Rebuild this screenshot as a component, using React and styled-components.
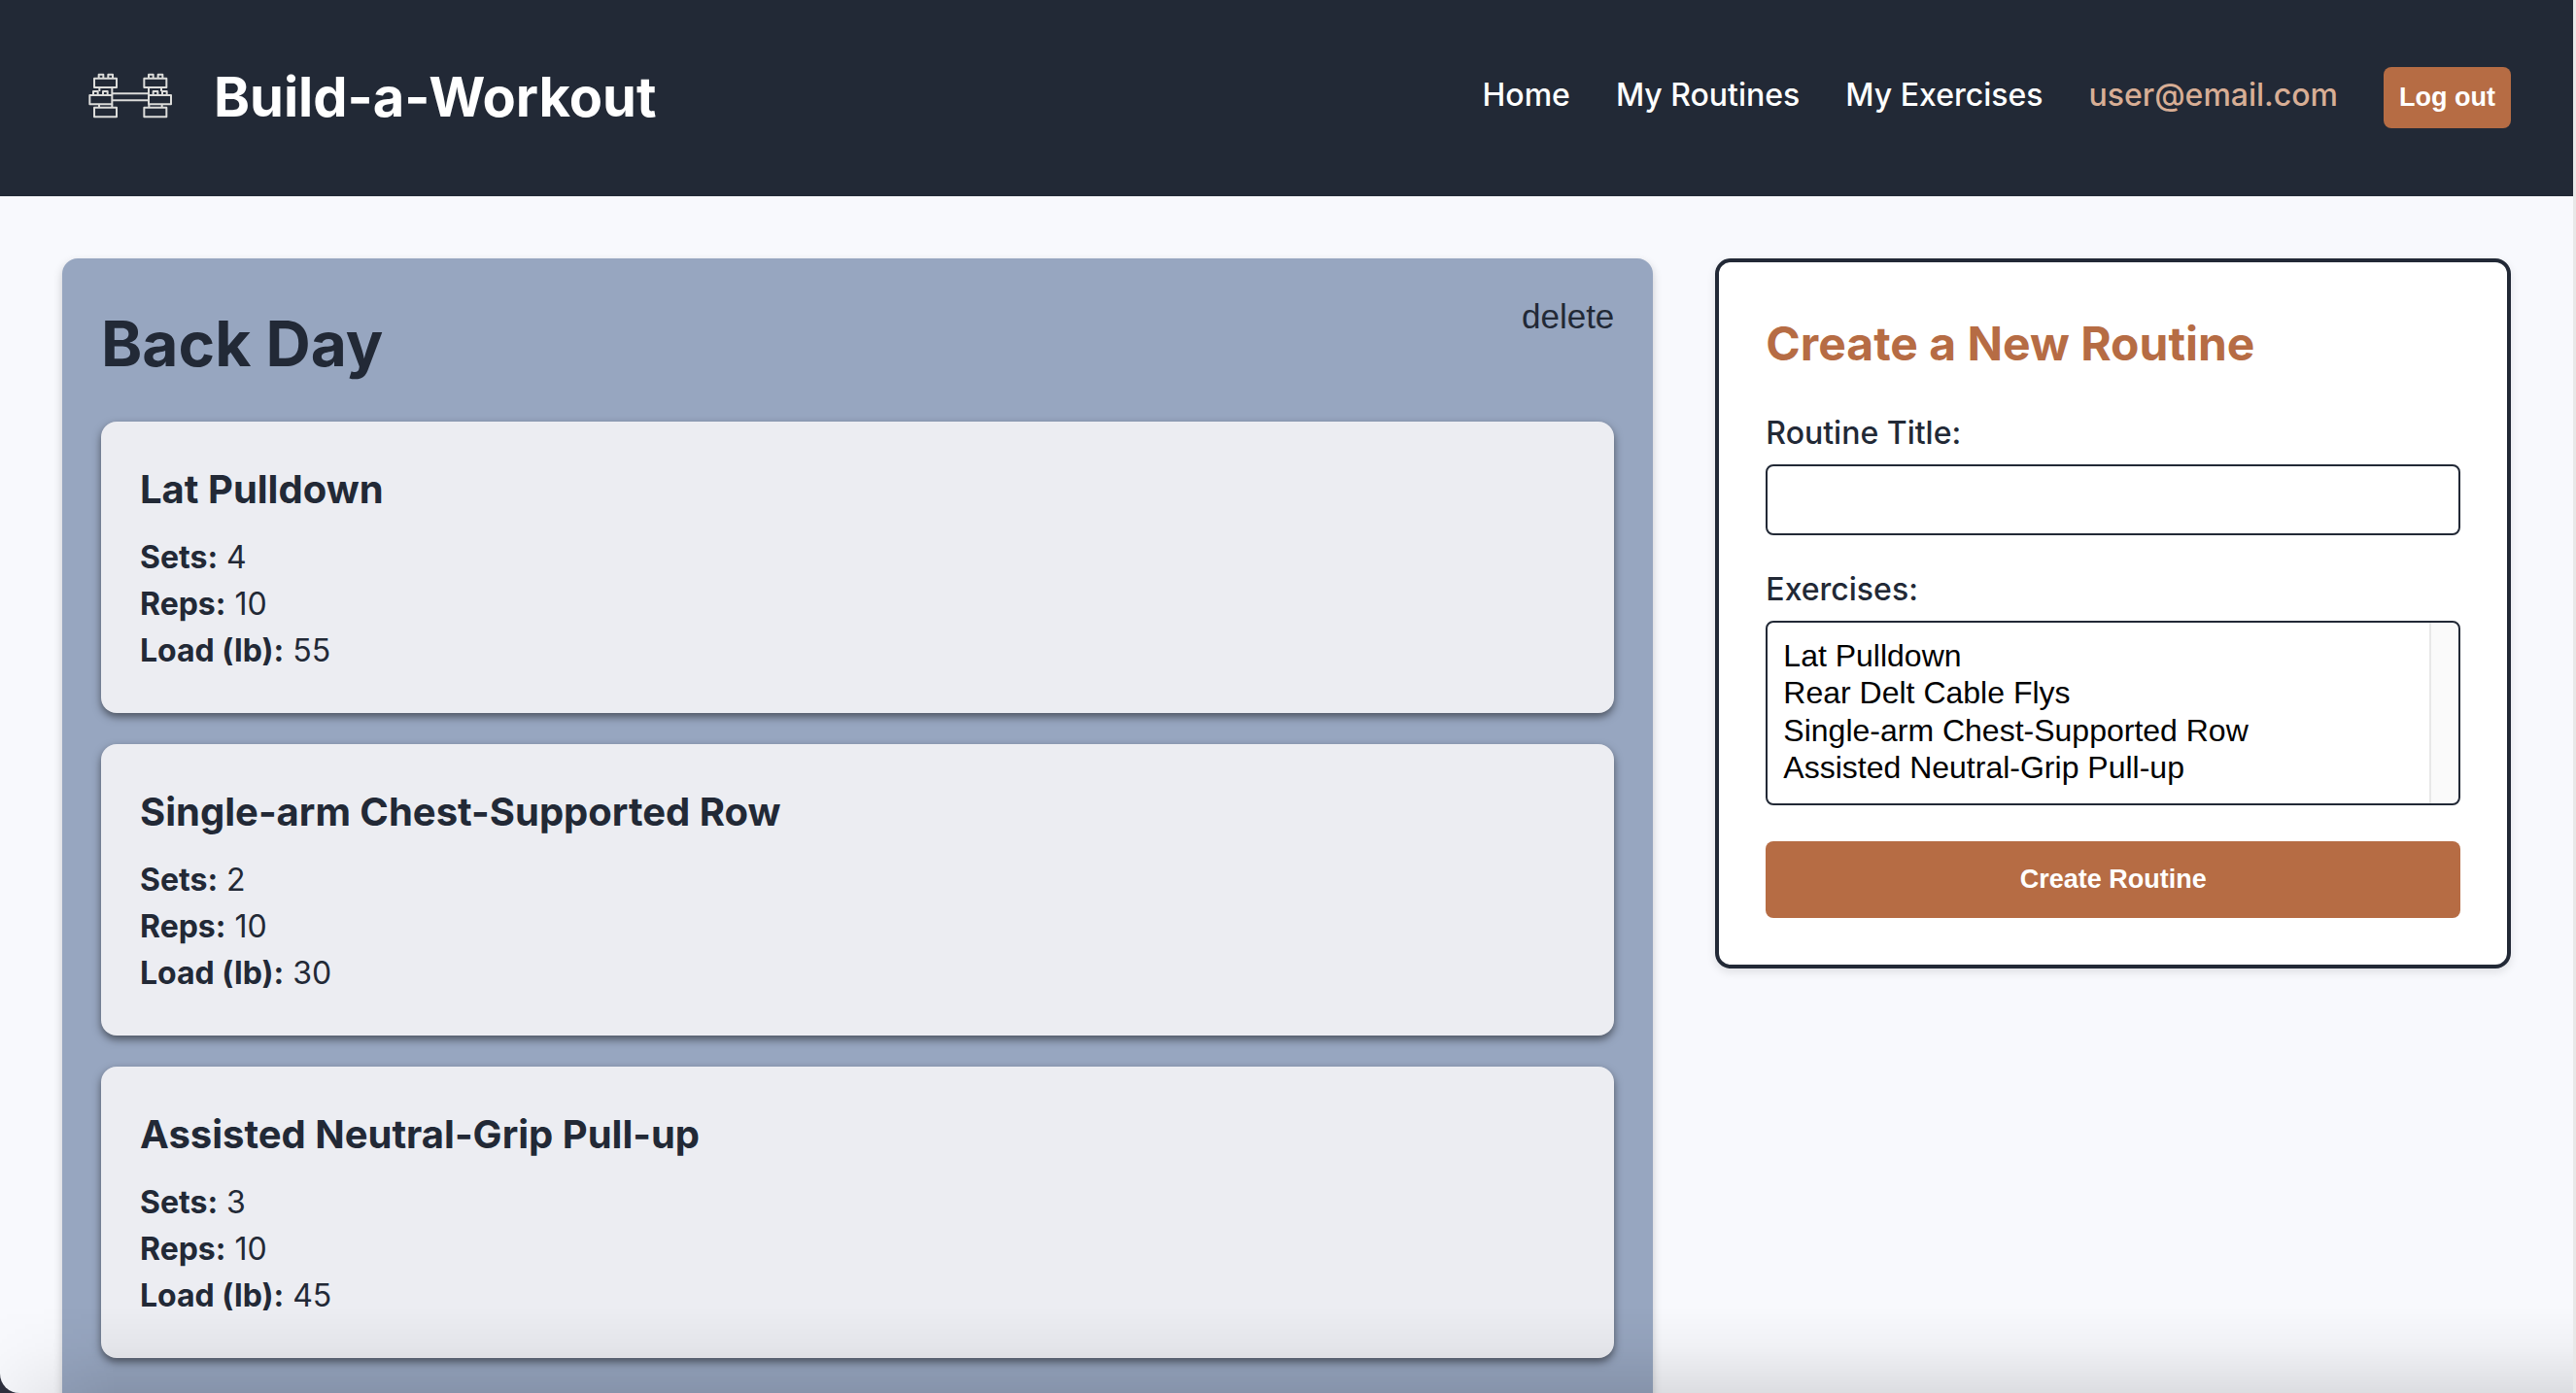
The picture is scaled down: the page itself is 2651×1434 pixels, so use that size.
import React from "react";
import styled, { createGlobalStyle } from "styled-components";

const ink = "#222936";
const rust = "#b66c44";
const inter = 'Inter, "Liberation Sans", sans-serif';
const arial = '"Liberation Sans", Arial, sans-serif';

const GlobalStyle = createGlobalStyle`
  *, *::before, *::after { box-sizing: border-box; }
  body {
    margin: 0;
    background: #2e303e;
    color: ${ink};
    font-family: ${inter};
    font-size: 32px;
    line-height: 48px;
  }
  h1, h2, h3, p, ul { margin: 0; padding: 0; }
`;

const Frame = styled.div`
  position: relative;
  height: 100vh;
  overflow: hidden;
  background: #f8f9fd;
  border-right: 3px solid #e8e8e8;
  border-bottom-left-radius: 20px;

  &::after {
    content: "";
    position: absolute;
    inset: auto 0 0 0;
    height: 88px;
    pointer-events: none;
    background: linear-gradient(to bottom, transparent, rgba(0, 0, 0, 0.03) 45%, rgba(0, 0, 0, 0.11));
    mask-image: linear-gradient(to right, rgba(0, 0, 0, 0.2), black 120px);
  }
`;

const Header = styled.header`
  display: flex;
  align-items: center;
  justify-content: space-between;
  min-height: 202px;
  padding: 0 64px 2px;
  background: ${ink};
  color: #fff;
`;

const Brand = styled.a`
  display: flex;
  align-items: center;
  gap: 16px;
  color: inherit;
  text-decoration: none;
`;

const BrandName = styled.h1`
  font-size: 56px;
  line-height: 84px;
  font-weight: 700;
`;

const Nav = styled.nav`
  display: flex;
  align-items: baseline;
  gap: 47px;
`;

const NavLink = styled.a`
  color: #fff;
  font-weight: 500;
  text-decoration: none;
`;

const UserEmail = styled.span`
  color: #d8ae95;
  font-weight: 500;
`;

const Button = styled.button`
  padding: ${(p) => (p.$wide ? "24px 16px" : "16px")};
  width: ${(p) => (p.$wide ? "100%" : "auto")};
  border: 0;
  border-radius: 8px;
  background: ${rust};
  color: #fff;
  font: 700 27px/31px ${arial};
  cursor: pointer;
`;

const Main = styled.main`
  display: grid;
  grid-template-columns: 2fr 1fr;
  align-items: start;
  gap: 64px;
  padding: 64px;
`;

const Routine = styled.article`
  padding: 40px 40px 72px;
  border-radius: 16px;
  background: #97a6c0;
  box-shadow: 0 4px 10px rgba(0, 0, 0, 0.2);
`;

const RoutineHead = styled.div`
  display: flex;
  align-items: flex-start;
  justify-content: space-between;
  margin-bottom: 32px;
`;

const RoutineTitle = styled.h2`
  font-size: 64px;
  line-height: 96px;
  font-weight: 700;
`;

const DeleteButton = styled.button`
  padding: 0;
  border: 0;
  background: none;
  color: ${ink};
  font: 400 35px/40px ${arial};
  cursor: pointer;
`;

const ExerciseList = styled.ul`
  display: grid;
  gap: 32px;
  list-style: none;
`;

const Exercise = styled.li`
  padding: 40px;
  border-radius: 16px;
  background: #ecedf2;
  box-shadow: 0 4px 8px rgba(0, 0, 0, 0.5);
`;

const ExerciseName = styled.h3`
  margin-bottom: 16px;
  font-size: 40px;
  line-height: 60px;
  font-weight: 700;
`;

const Stat = styled.p`
  font-weight: 400;

  strong { font-weight: 700; }
`;

const Form = styled.form`
  padding: 48px;
  border: 4px solid ${ink};
  border-radius: 16px;
  background: #fff;
  box-shadow: 0 4px 10px rgba(0, 0, 0, 0.1);
`;

const FormTitle = styled.h2`
  margin-bottom: 32px;
  color: ${rust};
  font-size: 48px;
  line-height: 72px;
  font-weight: 700;
`;

const Field = styled.div`
  margin-bottom: ${(p) => p.$gap}px;
`;

const Label = styled.label`
  display: block;
  margin-bottom: 8px;
  font-weight: 500;
`;

const TextInput = styled.input`
  display: block;
  width: 100%;
  padding: 16px;
  border: 2px solid ${ink};
  border-radius: 8px;
  background: #fff;
  font: 400 32px/37px ${arial};
`;

/* The background paints the scroll gutter down the right-hand side. */
const ExerciseSelect = styled.select`
  display: block;
  width: 100%;
  height: 190px;
  padding: 16px 14px;
  border: 2px solid ${ink};
  border-radius: 8px;
  background: linear-gradient(to right, #e8e8e8 2px, #fafafa 2px) right / 30px 100% no-repeat padding-box, #fff;
  color: #000;
  font: 400 32px/37px ${arial};

  option {
    padding: 0 2px;
  }
`;

const routineExercises = [
  { name: "Lat Pulldown", sets: 4, reps: 10, load: 55 },
  { name: "Single-arm Chest-Supported Row", sets: 2, reps: 10, load: 30 },
  { name: "Assisted Neutral-Grip Pull-up", sets: 3, reps: 10, load: 45 },
];

const allExercises = [
  "Lat Pulldown",
  "Rear Delt Cable Flys",
  "Single-arm Chest-Supported Row",
  "Assisted Neutral-Grip Pull-up",
];

// One stack of weight plates, built from toy bricks.
function Bricks({ x, side }) {
  const left = side === "left";
  return (
    <g>
      <rect x={x} y="62" width="69" height="28" />
      <path d={`M${x + 14} 62v-12h14v12M${x + 43} 62v-12h14v12`} />
      <path d={left ? `M${x + 16} 90v12M${x + 55} 90v24` : `M${x + 53} 90v12M${x + 14} 90v24`} />
      <rect x={left ? x - 14 : x + 14} y="114" width="69" height="28" />
      <path
        d={left ? `M${x - 3} 114v-12h14v12M${x + 27} 114v-12h14v12` : `M${x + 28} 114v-12h14v12M${x + 56} 114v-12h14v12`}
      />
      <path d={`M${x + 15} 142v10M${x + 55} 142v10`} />
      <rect x={x} y="152" width="69" height="29" />
    </g>
  );
}

function Logo() {
  return (
    <svg width="140" height="76" viewBox="-48 6 420 228" fill="none" stroke="#dcdcda" strokeWidth="6" strokeLinejoin="round" aria-hidden="true">
      <Bricks x={51} side="left" />
      <Bricks x={205} side="right" />
      <path d="M106 109H219M106 130H219" />
    </svg>
  );
}

export default function App() {
  return (
    <>
      <GlobalStyle />
      <Frame>
        <Header>
          <Brand href="#">
            <Logo />
            <BrandName>Build-a-Workout</BrandName>
          </Brand>
          <Nav>
            <NavLink href="#">Home</NavLink>
            <NavLink href="#routines">My Routines</NavLink>
            <NavLink href="#exercises">My Exercises</NavLink>
            <UserEmail>user@email.com</UserEmail>
            <Button type="button">Log out</Button>
          </Nav>
        </Header>
        <Main>
          <Routine>
            <RoutineHead>
              <RoutineTitle>Back Day</RoutineTitle>
              <DeleteButton type="button">delete</DeleteButton>
            </RoutineHead>
            <ExerciseList>
              {routineExercises.map((e) => (
                <Exercise key={e.name}>
                  <ExerciseName>{e.name}</ExerciseName>
                  <Stat><strong>Sets:</strong> {e.sets}</Stat>
                  <Stat><strong>Reps:</strong> {e.reps}</Stat>
                  <Stat><strong>Load (lb):</strong> {e.load}</Stat>
                </Exercise>
              ))}
            </ExerciseList>
          </Routine>
          <Form onSubmit={(e) => e.preventDefault()}>
            <FormTitle>Create a New Routine</FormTitle>
            <Field $gap={32}>
              <Label htmlFor="title">Routine Title:</Label>
              <TextInput id="title" type="text" />
            </Field>
            <Field $gap={37}>
              <Label htmlFor="exercises">Exercises:</Label>
              <ExerciseSelect id="exercises" multiple>
                {allExercises.map((name) => (
                  <option key={name}>{name}</option>
                ))}
              </ExerciseSelect>
            </Field>
            <Button type="submit" $wide>Create Routine</Button>
          </Form>
        </Main>
      </Frame>
    </>
  );
}
